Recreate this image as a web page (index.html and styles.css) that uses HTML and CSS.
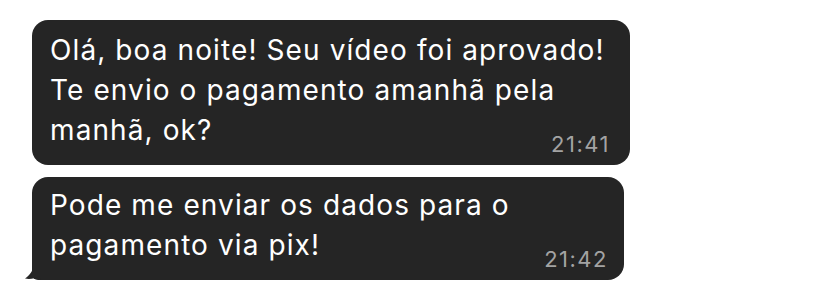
FILE: index.html
```html
<!DOCTYPE html>
<html lang="pt-BR">
<head>
    <meta charset="UTF-8">
    <meta name="viewport" content="width=device-width, initial-scale=1.0">
    <title>Conversa</title>
    <link rel="stylesheet" href="styles.css">
</head>
<body>
    <div class="chat">
        <div class="bubble bubble-first">
            <p class="message">Olá, boa noite! Seu vídeo foi aprovado!<br>Te envio o pagamento amanhã pela<br>manhã, ok?</p>
            <div class="time">21:41</div>
        </div>
        <div class="bubble bubble-last">
            <p class="message">Pode me enviar os dados para o<br>pagamento via pix!</p>
            <div class="time">21:42</div>
            <svg class="tail" width="16" height="20" viewBox="0 0 16 20">
                <path d="M8 0 L8 6 C8 11 5 15 0 18.5 C5 19.5 10 18.5 14 16 L16 20 L16 0 Z" fill="#252525"/>
            </svg>
        </div>
    </div>
</body>
</html>
```

FILE: styles.css
```css
body {
    margin: 0;
    background: #ffffff;
    font-family: Inter, "Noto Sans", sans-serif;
}

.chat {
    display: flex;
    flex-direction: column;
    align-items: flex-start;
    gap: 12px;
    padding: 20px 0 0 32px;
}

.bubble {
    position: relative;
    background: #252525;
    color: #ffffff;
    border-radius: 16px;
    padding: 10px 20px 9px 18px;
}

.bubble-first {
    width: 560px;
}

.bubble-last {
    width: 558px;
    padding-top: 8px;
    padding-right: 16px;
    border-bottom-left-radius: 6px;
}

.message {
    margin: 0;
    font-size: 28px;
    line-height: 40px;
    letter-spacing: 1.1px;
}

.time {
    margin-top: -18px;
    text-align: right;
    font-size: 22px;
    line-height: 24px;
    color: #a3a3a3;
    letter-spacing: 1.5px;
}

.tail {
    position: absolute;
    left: -7px;
    bottom: 0;
}
```
